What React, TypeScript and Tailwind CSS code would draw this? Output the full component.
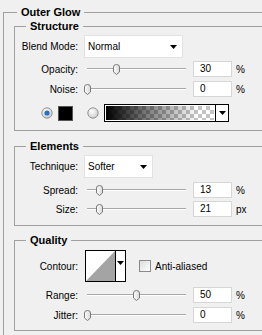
import React from "react";

const Tri = () => (
  <svg width="7" height="4" viewBox="0 0 7 4">
    <path d="M0 0 L7 0 L3.5 4 Z" fill="#000" />
  </svg>
);

const Thumb = () => (
  <svg width="9" height="13" viewBox="0 0 9 13">
    <defs>
      <linearGradient id="tg" x1="0" x2="1" y1="0" y2="0">
        <stop offset="0" stopColor="#fdfdfd" />
        <stop offset="1" stopColor="#d8d8d8" />
      </linearGradient>
    </defs>
    <path d="M1.5 4 Q1.5 1.5 4.5 1.5 Q7.5 1.5 7.5 4 L7.5 9 L4.5 11.5 L1.5 9 Z" fill="url(#tg)" stroke="#7a7a7a" strokeWidth="1" />
  </svg>
);

function Slider({ pct }: { pct: number }) {
  const left = 3 + (pct / 100) * 99 - 4.5;
  return (
    <div className="relative w-[102px] h-[16px]">
      <div className="absolute left-[3px] right-0 top-[7px] h-[2px] border-t border-[#a8a8a8] bg-white" />
      <div className="absolute top-[2px] leading-none" style={{ left }}>
        <Thumb />
      </div>
    </div>
  );
}

function Label({ children }: { children: React.ReactNode }) {
  return <div className="w-[63px] text-right shrink-0 whitespace-nowrap">{children}</div>;
}

function SliderRow({ label, value, pct, unit, className = "" }: { label: string; value: string; pct: number; unit: string; className?: string }) {
  return (
    <div className={"flex items-center h-[16px] " + className}>
      <Label>{label}</Label>
      <div className="ml-[6px]">
        <Slider pct={pct} />
      </div>
      <div className="ml-[7px] w-[39px] h-[16px] bg-white border border-[#d6d6d6] pl-[6px] leading-[14px]">{value}</div>
      <div className="ml-[4px]">{unit}</div>
    </div>
  );
}

function Dropdown({ label, value, width, className = "" }: { label: string; value: string; width: string; className?: string }) {
  return (
    <div className={"flex items-center " + className}>
      <Label>{label}</Label>
      <div className={"ml-[6px] h-[23px] bg-white border border-[#e2e2e2] flex items-center justify-between pl-[3px] pr-[5px] " + width}>
        <span>{value}</span>
        <Tri />
      </div>
    </div>
  );
}

const Radio = ({ on }: { on: boolean }) => (
  <svg width="12" height="12" viewBox="0 0 12 12">
    <defs>
      <radialGradient id={on ? "rg1" : "rg0"} cx="0.4" cy="0.35" r="0.7">
        <stop offset="0" stopColor="#ffffff" />
        <stop offset="1" stopColor="#c8c8c8" />
      </radialGradient>
    </defs>
    <circle cx="6" cy="6" r="5.2" fill={`url(#${on ? "rg1" : "rg0"})`} stroke="#8a8a8a" strokeWidth="0.9" />
    {on && <circle cx="6" cy="6" r="2.6" fill="#2a6fc0" />}
  </svg>
);

function Legend({ children, outer = false }: { children: React.ReactNode; outer?: boolean }) {
  return (
    <legend className={(outer ? "ml-[13px]" : "ml-[11px]") + " px-[4px] font-bold text-[11px] leading-[14px]"}>{children}</legend>
  );
}

export default function App() {
  return (
    <div className="w-[262px] h-[335px] overflow-hidden bg-[#f0f0f0] text-black text-[10px] font-['Liberation_Sans',Arial,sans-serif] pt-[5px]">
      <fieldset className="ml-[3px] w-[272px] border border-[#a0a0a0] pb-[20px]">
        <Legend outer>Outer Glow</Legend>

        <fieldset className="ml-[10px] w-[254px] border border-[#a0a0a0] pb-[8px]">
          <Legend>Structure</Legend>
          <Dropdown label="Blend Mode:" value="Normal" width="w-[99px]" className="mt-[2px]" />
          <SliderRow label="Opacity:" value="30" pct={30} unit="%" className="mt-[3px]" />
          <SliderRow label="Noise:" value="0" pct={0} unit="%" className="mt-[4px]" />
          <div className="mt-[7px] h-[18px] flex items-center pl-[26px]">
            <Radio on />
            <div className="ml-[5px] w-[15px] h-[15px] bg-black border border-[#555]" />
            <div className="ml-[14px]">
              <Radio on={false} />
            </div>
            <div className="ml-[5px] w-[125px] h-[18px] border border-black flex bg-white">
              <div className="flex-1 m-[1px] bg-[conic-gradient(#c4c4c4_25%,#ffffff_0_50%,#c4c4c4_0_75%,#ffffff_0)] bg-[length:8px_8px]">
                <div className="w-full h-full bg-[linear-gradient(to_right,#000,rgba(0,0,0,0.55)_35%,rgba(0,0,0,0)_85%)]" />
              </div>
              <div className="w-px bg-black" />
              <div className="w-[12px] flex items-center justify-center">
                <Tri />
              </div>
            </div>
          </div>
        </fieldset>

        <fieldset className="ml-[10px] mt-[8px] w-[254px] border border-[#a0a0a0] pb-[8px]">
          <Legend>Elements</Legend>
          <Dropdown label="Technique:" value="Softer" width="w-[69px]" className="mt-[2px]" />
          <SliderRow label="Spread:" value="13" pct={13} unit="%" className="mt-[4px]" />
          <SliderRow label="Size:" value="21" pct={13} unit="px" className="mt-[3px]" />
        </fieldset>

        <fieldset className="ml-[10px] mt-[7px] w-[254px] border border-[#a0a0a0] pb-[7px]">
          <Legend>Quality</Legend>
          <div className="mt-[3px] flex items-center">
            <Label>Contour:</Label>
            <div className="ml-[7px] w-[41px] h-[32px] border border-black flex bg-white">
              <svg width="29" height="30" viewBox="0 0 29 30" className="shrink-0">
                <rect width="29" height="30" fill="#fff" />
                <path d="M0 30 L29 0 L29 30 Z" fill="#a4a4a4" />
              </svg>
              <div className="w-px bg-black" />
              <div className="flex-1 flex justify-center pt-[10px]">
                <Tri />
              </div>
            </div>
            <div className="ml-[13px] w-[12px] h-[12px] border border-[#8a8a8a] bg-[linear-gradient(135deg,#dcdcdc,#ffffff)]" />
            <span className="ml-[4px]">Anti-aliased</span>
          </div>
          <SliderRow label="Range:" value="50" pct={50} unit="%" className="mt-[5px]" />
          <SliderRow label="Jitter:" value="0" pct={0} unit="%" className="mt-[4px]" />
        </fieldset>
      </fieldset>
    </div>
  );
}
